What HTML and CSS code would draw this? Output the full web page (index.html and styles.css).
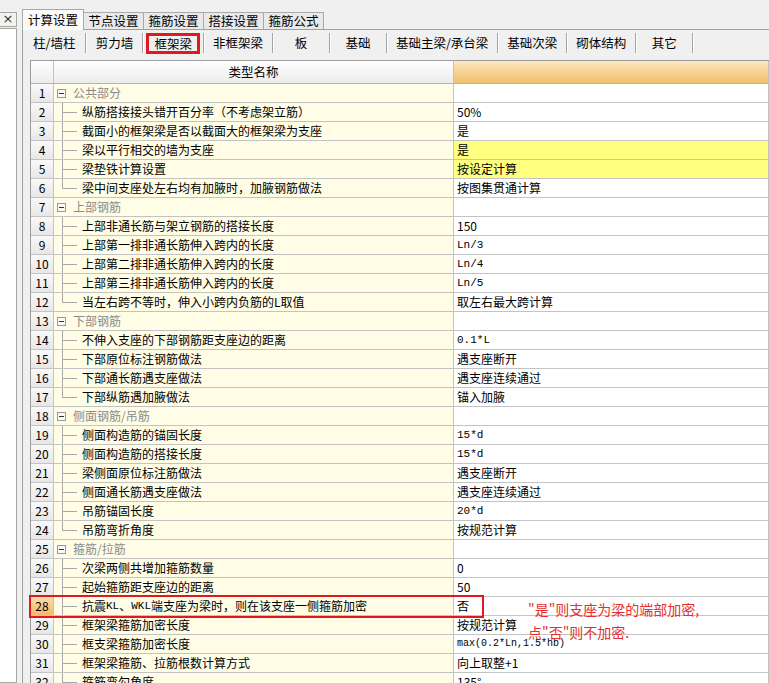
FILE: index.html
```html
<!DOCTYPE html>
<html lang="zh-CN">
<head>
<meta charset="utf-8">
<title>计算设置</title>
<link rel="stylesheet" href="styles.css">
</head>
<body>
<div class="app">
  <div class="side">
    <div class="closebtn">×</div>
    <div class="sidepanel"></div>
  </div>
  <div class="main">
    <div class="tabs">
      <div class="tab active">计算设置</div>
      <div class="tab">节点设置</div>
      <div class="tab">箍筋设置</div>
      <div class="tab">搭接设置</div>
      <div class="tab">箍筋公式</div>
    </div>
    <div class="pane">
      <div class="subtabs">
        <div class="subtab first">柱/墙柱</div>
        <div class="subtab">剪力墙</div>
        <div class="subtab boxed"><span class="redbox">框架梁</span></div>
        <div class="subtab">非框架梁</div>
        <div class="subtab">板</div>
        <div class="subtab">基础</div>
        <div class="subtab">基础主梁/承台梁</div>
        <div class="subtab">基础次梁</div>
        <div class="subtab">砌体结构</div>
        <div class="subtab">其它</div>
      </div>
      <div class="gridwrap">
        <div class="grid">
          <div class="row head"><div class="num"></div><div class="name">类型名称</div><div class="val"></div></div>

          <div class="row group"><div class="num">1</div><div class="name"><span class="gbox"></span>公共部分</div><div class="val"></div></div>
          <div class="row"><div class="num">2</div><div class="name"><span class="br"></span>纵筋搭接接头错开百分率（不考虑架立筋）</div><div class="val">50%</div></div>
          <div class="row"><div class="num">3</div><div class="name"><span class="br"></span>截面小的框架梁是否以截面大的框架梁为支座</div><div class="val">是</div></div>
          <div class="row"><div class="num">4</div><div class="name"><span class="br"></span>梁以平行相交的墙为支座</div><div class="val hot">是</div></div>
          <div class="row"><div class="num">5</div><div class="name"><span class="br"></span>梁垫铁计算设置</div><div class="val hot">按设定计算</div></div>
          <div class="row"><div class="num">6</div><div class="name"><span class="br last"></span>梁中间支座处左右均有加腋时，加腋钢筋做法</div><div class="val">按图集贯通计算</div></div>

          <div class="row group"><div class="num">7</div><div class="name"><span class="gbox"></span>上部钢筋</div><div class="val"></div></div>
          <div class="row"><div class="num">8</div><div class="name"><span class="br"></span>上部非通长筋与架立钢筋的搭接长度</div><div class="val">150</div></div>
          <div class="row"><div class="num">9</div><div class="name"><span class="br"></span>上部第一排非通长筋伸入跨内的长度</div><div class="val mono">Ln/3</div></div>
          <div class="row"><div class="num">10</div><div class="name"><span class="br"></span>上部第二排非通长筋伸入跨内的长度</div><div class="val mono">Ln/4</div></div>
          <div class="row"><div class="num">11</div><div class="name"><span class="br"></span>上部第三排非通长筋伸入跨内的长度</div><div class="val mono">Ln/5</div></div>
          <div class="row"><div class="num">12</div><div class="name"><span class="br last"></span>当左右跨不等时，伸入小跨内负筋的L取值</div><div class="val">取左右最大跨计算</div></div>

          <div class="row group"><div class="num">13</div><div class="name"><span class="gbox"></span>下部钢筋</div><div class="val"></div></div>
          <div class="row"><div class="num">14</div><div class="name"><span class="br"></span>不伸入支座的下部钢筋距支座边的距离</div><div class="val mono">0.1*L</div></div>
          <div class="row"><div class="num">15</div><div class="name"><span class="br"></span>下部原位标注钢筋做法</div><div class="val">遇支座断开</div></div>
          <div class="row"><div class="num">16</div><div class="name"><span class="br"></span>下部通长筋遇支座做法</div><div class="val">遇支座连续通过</div></div>
          <div class="row"><div class="num">17</div><div class="name"><span class="br last"></span>下部纵筋遇加腋做法</div><div class="val">锚入加腋</div></div>

          <div class="row group"><div class="num">18</div><div class="name"><span class="gbox"></span>侧面钢筋/吊筋</div><div class="val"></div></div>
          <div class="row"><div class="num">19</div><div class="name"><span class="br"></span>侧面构造筋的锚固长度</div><div class="val mono">15*d</div></div>
          <div class="row"><div class="num">20</div><div class="name"><span class="br"></span>侧面构造筋的搭接长度</div><div class="val mono">15*d</div></div>
          <div class="row"><div class="num">21</div><div class="name"><span class="br"></span>梁侧面原位标注筋做法</div><div class="val">遇支座断开</div></div>
          <div class="row"><div class="num">22</div><div class="name"><span class="br"></span>侧面通长筋遇支座做法</div><div class="val">遇支座连续通过</div></div>
          <div class="row"><div class="num">23</div><div class="name"><span class="br"></span>吊筋锚固长度</div><div class="val mono">20*d</div></div>
          <div class="row"><div class="num">24</div><div class="name"><span class="br last"></span>吊筋弯折角度</div><div class="val">按规范计算</div></div>

          <div class="row group"><div class="num">25</div><div class="name"><span class="gbox"></span>箍筋/拉筋</div><div class="val"></div></div>
          <div class="row"><div class="num">26</div><div class="name"><span class="br"></span>次梁两侧共增加箍筋数量</div><div class="val">0</div></div>
          <div class="row"><div class="num">27</div><div class="name"><span class="br"></span>起始箍筋距支座边的距离</div><div class="val">50</div></div>
          <div class="row sel"><div class="num">28</div><div class="name"><span class="br"></span>抗震<span class="mono">KL</span>、<span class="mono">WKL</span>端支座为梁时，则在该支座一侧箍筋加密</div><div class="val">否</div></div>
          <div class="row"><div class="num">29</div><div class="name"><span class="br"></span>框架梁箍筋加密长度</div><div class="val">按规范计算</div></div>
          <div class="row"><div class="num">30</div><div class="name"><span class="br"></span>框支梁箍筋加密长度</div><div class="val mono small">max(0.2*Ln,1.5*hb)</div></div>
          <div class="row"><div class="num">31</div><div class="name"><span class="br"></span>框架梁箍筋、拉筋根数计算方式</div><div class="val">向上取整+1</div></div>
          <div class="row"><div class="num">32</div><div class="name"><span class="br"></span>箍筋弯勾角度</div><div class="val">135°</div></div>
        </div>
      </div>
    </div>
  </div>
  <div class="hl-box"></div>
  <div class="note">"是"则支座为梁的端部加密,<br>点"否"则不加密.</div>
</div>
</body>
</html>
```

FILE: styles.css
```css
html, body {
  margin: 0;
  padding: 0;
}
body {
  background: #f0f0f0;
  font-family: "Noto Sans CJK SC", "Noto Sans", sans-serif;
  font-size: 12px;
  color: #000;
}
.app {
  position: relative;
  display: flex;
  width: 769px;
  height: 683px;
  overflow: hidden;
  background: #f0f0f0;
}

/* left dock */
.side {
  width: 17px;
  flex: none;
  display: flex;
  flex-direction: column;
  margin-right: 5px;
}
.closebtn {
  margin-top: 12px;
  height: 13px;
  border: 1px solid #a6a6a6;
  border-left: none;
  background: #f2f2f2;
  font-size: 13px;
  line-height: 12px;
  text-align: center;
  color: #333;
  font-family: "DejaVu Sans", sans-serif;
}
.sidepanel {
  margin-top: 1px;
  flex: 1;
  background: #fff;
  border: 1px solid #a6a6a6;
  border-left: none;
}

/* main area */
.main {
  flex: 1;
  display: flex;
  flex-direction: column;
  padding-top: 9px;
  min-width: 0;
}
.tabs {
  display: flex;
  align-items: flex-end;
  height: 20px;
  padding-left: 0;
}
.tab {
  box-sizing: border-box;
  width: 60px;
  height: 17px;
  border: 1px solid #a9a9a9;
  border-bottom: none;
  border-left: none;
  background: #e9e9e9;
  text-align: center;
  font-size: 12.5px;
  line-height: 16px;
}
.tab.active {
  width: 62px;
  height: 21px;
  margin-bottom: -1px;
  background: #fbfbfb;
  border-left: 1px solid #a9a9a9;
  line-height: 19px;
  position: relative;
  z-index: 1;
}
.pane {
  flex: 1;
  border-top: 1px solid #a0a0a0;
  border-left: 1px solid #a0a0a0;
  display: flex;
  flex-direction: column;
  min-height: 0;
}

/* second level buttons */
.subtabs {
  display: flex;
  padding-top: 3px;
  height: 20px;
  margin-bottom: 7px;
}
.subtab {
  box-sizing: border-box;
  min-width: 57px;
  padding: 0 9px;
  height: 20px;
  line-height: 20px;
  text-align: center;
  font-size: 12.5px;
  border-right: 1px solid #a4a4a4;
  box-shadow: 1px 0 0 #fff;
  white-space: nowrap;
}
.subtab.first {
  padding: 0 10px;
  min-width: 63px;
}
.subtab.boxed {
  padding: 0 3px;
  min-width: 60px;
  display: flex;
  align-items: center;
  justify-content: center;
}
.redbox {
  box-sizing: border-box;
  display: block;
  height: 21px;
  line-height: 15px;
  padding: 0 5px;
  border: 3px solid #e0191e;
}

/* grid */
.gridwrap {
  flex: 1;
  padding-left: 7px;
  min-height: 0;
}
.grid {
  border-left: 1px solid #9c9c9c;
  border-top: 1px solid #9c9c9c;
  height: 100%;
  overflow: hidden;
}
.row {
  display: grid;
  grid-template-columns: 23px 400px 1fr;
  height: 19px;
}
.row > div {
  box-sizing: border-box;
  border-right: 1px solid #c3c3c3;
  border-bottom: 1px solid #c3c3c3;
  white-space: nowrap;
  overflow: hidden;
}
.num {
  background: linear-gradient(#f9f9f9, #e7e7e7);
  text-align: center;
  line-height: 18px;
  font-size: 12px;
}
.name {
  background: #fffde6;
  display: flex;
  align-items: center;
  line-height: 18px;
}
.val {
  background: #fff;
  padding-left: 3px;
  line-height: 18px;
}
.val.hot {
  background: #ffff80;
}
.mono {
  font-family: "Liberation Mono", "Noto Sans CJK SC", monospace;
  font-size: 11px;
}
.val.small {
  font-size: 10px;
}
.row.sel .num {
  background: linear-gradient(#fbdcaa, #f4b96c);
}

/* header row */
.row.head {
  height: 23px;
}
.row.head > div {
  border-bottom-color: #b4b4b4;
}
.row.head .num,
.row.head .name {
  background: linear-gradient(#ffffff, #ececec);
}
.row.head .name {
  justify-content: center;
  font-size: 12.5px;
}
.row.head .val {
  background: linear-gradient(#fbe8c4 0%, #f7d596 45%, #efc070 100%);
}

/* tree */
.group .name {
  color: #8a8a8a;
}
.gbox {
  box-sizing: border-box;
  flex: none;
  width: 9px;
  height: 9px;
  margin-left: 3px;
  margin-right: 7px;
  border: 1px solid #9a9a9a;
  background: linear-gradient(#333, #333) center / 5px 1px no-repeat, #fafafa;
}
.br {
  flex: none;
  align-self: stretch;
  width: 15px;
  margin-left: 8px;
  margin-right: 5px;
  background:
    linear-gradient(#a8a8a8, #a8a8a8) 0 0 / 1px 100% no-repeat,
    linear-gradient(#a8a8a8, #a8a8a8) 0 9px / 15px 1px no-repeat;
}
.br.last {
  background:
    linear-gradient(#a8a8a8, #a8a8a8) 0 0 / 1px 10px no-repeat,
    linear-gradient(#a8a8a8, #a8a8a8) 0 9px / 15px 1px no-repeat;
}

/* overlays */
.hl-box {
  position: absolute;
  left: 29px;
  top: 595px;
  width: 455px;
  height: 23px;
  border: 2px solid #e0191e;
  box-sizing: border-box;
  pointer-events: none;
}
.note {
  position: absolute;
  left: 528px;
  top: 598px;
  font-size: 14px;
  line-height: 23px;
  color: #e3302f;
  white-space: nowrap;
}
```
